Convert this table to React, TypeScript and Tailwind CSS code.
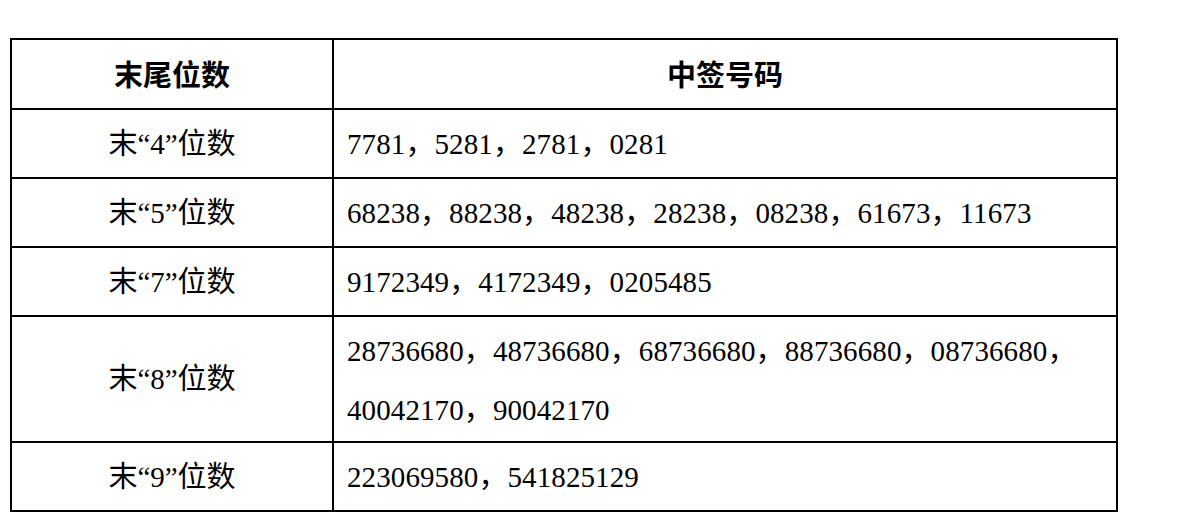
const rows: { tail: string; nums: string[]; tall?: boolean }[] = [
  { tail: '4', nums: ['7781，5281，2781，0281'] },
  { tail: '5', nums: ['68238，88238，48238，28238，08238，61673，11673'] },
  { tail: '7', nums: ['9172349，4172349，0205485'] },
  {
    tail: '8',
    nums: ['28736680，48736680，68736680，88736680，08736680，', '40042170，90042170'],
    tall: true,
  },
  { tail: '9', nums: ['223069580，541825129'] },
]

export default function App() {
  return (
    <div className="w-[1180px] h-[532px] bg-white pt-[38px] pl-[10px] text-black font-['Liberation_Serif','Noto_Sans_CJK_SC',serif]">
      <table className="w-[1108px] border-collapse border-2 border-black text-[29px]">
        <colgroup>
          <col className="w-[322px]" />
          <col />
        </colgroup>
        <thead>
          <tr className="h-[70px]">
            <th className="border-2 border-black text-center font-bold font-['Noto_Sans_CJK_SC',sans-serif] text-[29px]">
              末尾位数
            </th>
            <th className="border-2 border-black text-center font-bold font-['Noto_Sans_CJK_SC',sans-serif] text-[29px]">
              中签号码
            </th>
          </tr>
        </thead>
        <tbody>
          {rows.map((r) => (
            <tr key={r.tail} className={r.tall ? 'h-[126px]' : 'h-[69px]'}>
              <td className="border-2 border-black text-center align-middle pt-[2px]">
                末“{r.tail}”位数
              </td>
              <td
                className={`border-2 border-black pl-[13px] align-middle tracking-[0.1px] ${
                  r.tall ? 'leading-[59px] pt-[4px]' : 'pt-[2px]'
                }`}
              >
                {r.nums.map((n) => (
                  <div key={n}>{n}</div>
                ))}
              </td>
            </tr>
          ))}
        </tbody>
      </table>
    </div>
  )
}
